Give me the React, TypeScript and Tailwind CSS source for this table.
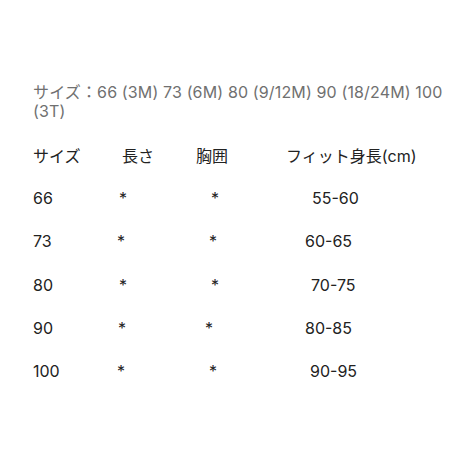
import React from 'react';

const HEADER = [
  { text: 'サイズ', w: 'w-[89px]' },
  { text: '長さ', w: 'w-[74px]' },
  { text: '胸囲', w: 'w-[90px]' },
  { text: 'フィット身長(cm)', w: '' },
];

// spacing copied from the original hand-aligned table
const ROWS = [
  { size: '66', w1: 'w-[80px]', gap: 'w-[72px]', ml: 'ml-[87px]', range: '55-60' },
  { size: '73', w1: 'w-[78px]', gap: 'w-[72px]', ml: 'ml-[82px]', range: '60-65' },
  { size: '80', w1: 'w-[80px]', gap: 'w-[72px]', ml: 'ml-[86px]', range: '70-75' },
  { size: '90', w1: 'w-[79px]', gap: 'w-[67px]', ml: 'ml-[86px]', range: '80-85' },
  { size: '100', w1: 'w-[78px]', gap: 'w-[72px]', ml: 'ml-[87px]', range: '90-95' },
];

export default function App() {
  return (
    <div
      className="min-h-[460px] w-[460px] bg-white pl-[33px] pr-4 pt-[83px] text-[16px] text-[#222] font-['Inter','Noto_Sans_CJK_JP',sans-serif]"
    >
      <p className="leading-[19px] tracking-[0.14px] text-[#707070]">
        サイズ：66 (3M) 73 (6M) 80 (9/12M) 90 (18/24M) 100 (3T)
      </p>

      <div className="mt-[14px]">
        <div className="flex h-[41.5px] items-center">
          {HEADER.map(h => (
            <span key={h.text} className={`shrink-0 ${h.w}`}>
              {h.text}
            </span>
          ))}
        </div>

        {ROWS.map(r => (
          <div key={r.size} className="flex h-[43.3px] items-center">
            <span className={`shrink-0 ${r.w1}`}>{r.size}</span>
            <span className="w-5 shrink-0 text-center">*</span>
            <span className={`shrink-0 ${r.gap}`} />
            <span className="w-5 shrink-0 text-center">*</span>
            <span className={`shrink-0 ${r.ml}`}>{r.range}</span>
          </div>
        ))}
      </div>
    </div>
  );
}
